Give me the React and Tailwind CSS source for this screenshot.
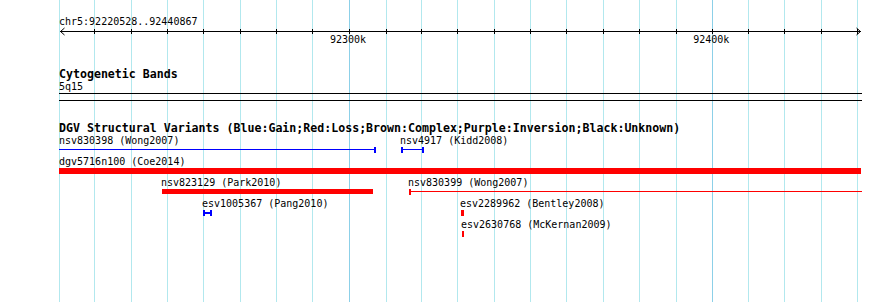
const GRID = [59, 94, 131, 167, 203, 240, 276, 312, 349, 386, 421, 457, 494, 530, 566, 603, 639, 676, 712, 748, 784, 821, 857]
const MAJOR = [349, 712]

// DGV features, one list per packed row. x/w are screen pixels from the genome coordinates.
const rows = [
  [
    { name: 'nsv830398 (Wong2007)', x: 59, w: 317, color: 'blue', type: 'line', caps: 'right', labelDx: 0 },
    { name: 'nsv4917 (Kidd2008)', x: 401, w: 23, color: 'blue', type: 'line', caps: 'both' },
  ],
  [
    { name: 'dgv5716n100 (Coe2014)', x: 59, w: 802, color: 'red', type: 'bar', labelDx: 0 },
  ],
  [
    { name: 'nsv823129 (Park2010)', x: 162, w: 211, color: 'red', type: 'bar', h: 5 },
    { name: 'nsv830399 (Wong2007)', x: 409, w: 453, color: 'red', type: 'line', caps: 'left' },
  ],
  [
    { name: 'esv1005367 (Pang2010)', x: 203, w: 9, color: 'blue', type: 'h' },
    { name: 'esv2289962 (Bentley2008)', x: 461, w: 3, color: 'red', type: 'bar' },
  ],
  [
    { name: 'esv2630768 (McKernan2009)', x: 462, w: 2, color: 'red', type: 'bar', labelDx: -1 },
  ],
]

function Glyph({ f }) {
  const bg = f.color === 'blue' ? 'bg-[#0000ff]' : 'bg-[#ff0000]'
  if (f.type === 'bar') {
    return <div className={bg} style={{ width: f.w, height: f.h || 6 }} />
  }
  const left = f.caps === 'left' || f.caps === 'both' || f.type === 'h'
  const right = f.caps === 'right' || f.caps === 'both' || f.type === 'h'
  return (
    <div className="flex items-start h-[6px]" style={{ width: f.w }}>
      {left && <div className={`w-[2px] h-[6px] shrink-0 ${bg}`} />}
      <div className={`flex-1 mt-[2px] ${f.type === 'h' ? 'h-[2px]' : 'h-px'} ${bg}`} />
      {right && <div className={`w-[2px] h-[6px] shrink-0 ${bg}`} />}
    </div>
  )
}

function Feature({ f }) {
  return (
    <div className="absolute top-0 flex flex-col gap-px" style={{ left: f.x }}>
      <span className="text-[10px] leading-[11px] whitespace-pre" style={{ marginLeft: f.labelDx ?? -1 }}>{f.name}</span>
      <Glyph f={f} />
    </div>
  )
}

function Header({ children }) {
  return (
    <div className="pl-[59px] h-[14px] text-[11.6px] leading-[14px] font-bold whitespace-pre">{children}</div>
  )
}

function Ruler() {
  return (
    <svg width="890" height="12" className="block" shapeRendering="crispEdges">
      <line x1="60" y1="6.5" x2="861" y2="6.5" stroke="black" />
      {GRID.slice(1).map(x => (
        <line key={x} x1={x + 0.5} y1="4" x2={x + 0.5} y2="9" stroke="black" />
      ))}
      <polyline points="64.5,3 60.5,6.5 64.5,10" fill="none" stroke="black" shapeRendering="auto" />
      <polyline points="856.5,3 860.5,6.5 856.5,10" fill="none" stroke="black" shapeRendering="auto" />
    </svg>
  )
}

export default function App() {
  return (
    <div className="relative w-[890px] h-[303px] bg-white overflow-hidden text-black font-['DejaVu_Sans_Mono','Liberation_Mono',monospace]">
      {/* grid lines behind the tracks */}
      <div className="absolute inset-x-0 top-0 h-[302px] pointer-events-none">
        {GRID.map(x => (
          <div
            key={x}
            className={`absolute top-0 w-px h-full ${MAJOR.includes(x) ? 'bg-[#8cd0e8]' : 'bg-[#b2e8ee]'}`}
            style={{ left: x }}
          />
        ))}
      </div>

      <div className="relative flex flex-col">
        {/* ruler */}
        <div className="flex flex-col pt-[16px] h-[67px]">
          <span className="pl-[59px] text-[10px] leading-[11px]">chr5:92220528..92440867</span>
          <div className="-mt-[2px]">
            <Ruler />
          </div>
          <div className="flex text-[10px] leading-[11px] -mt-[3px]">
            <span className="ml-[330px]">92300k</span>
            <span className="ml-[327px]">92400k</span>
          </div>
        </div>

        {/* cytoband track */}
        <Header>Cytogenetic Bands</Header>
        <div className="flex flex-col h-[40px] pl-[59px]">
          <span className="text-[10px] leading-[11px]">5q15</span>
          <div className="mt-px w-[803px] h-[8px] border-y border-black" />
        </div>

        {/* DGV track */}
        <Header>DGV Structural Variants (Blue:Gain;Red:Loss;Brown:Complex;Purple:Inversion;Black:Unknown)</Header>
        <div className="flex flex-col">
          {rows.map((row, i) => (
            <div key={i} className="relative h-[21px]">
              {row.map(f => <Feature key={f.name} f={f} />)}
            </div>
          ))}
        </div>
      </div>
    </div>
  )
}
